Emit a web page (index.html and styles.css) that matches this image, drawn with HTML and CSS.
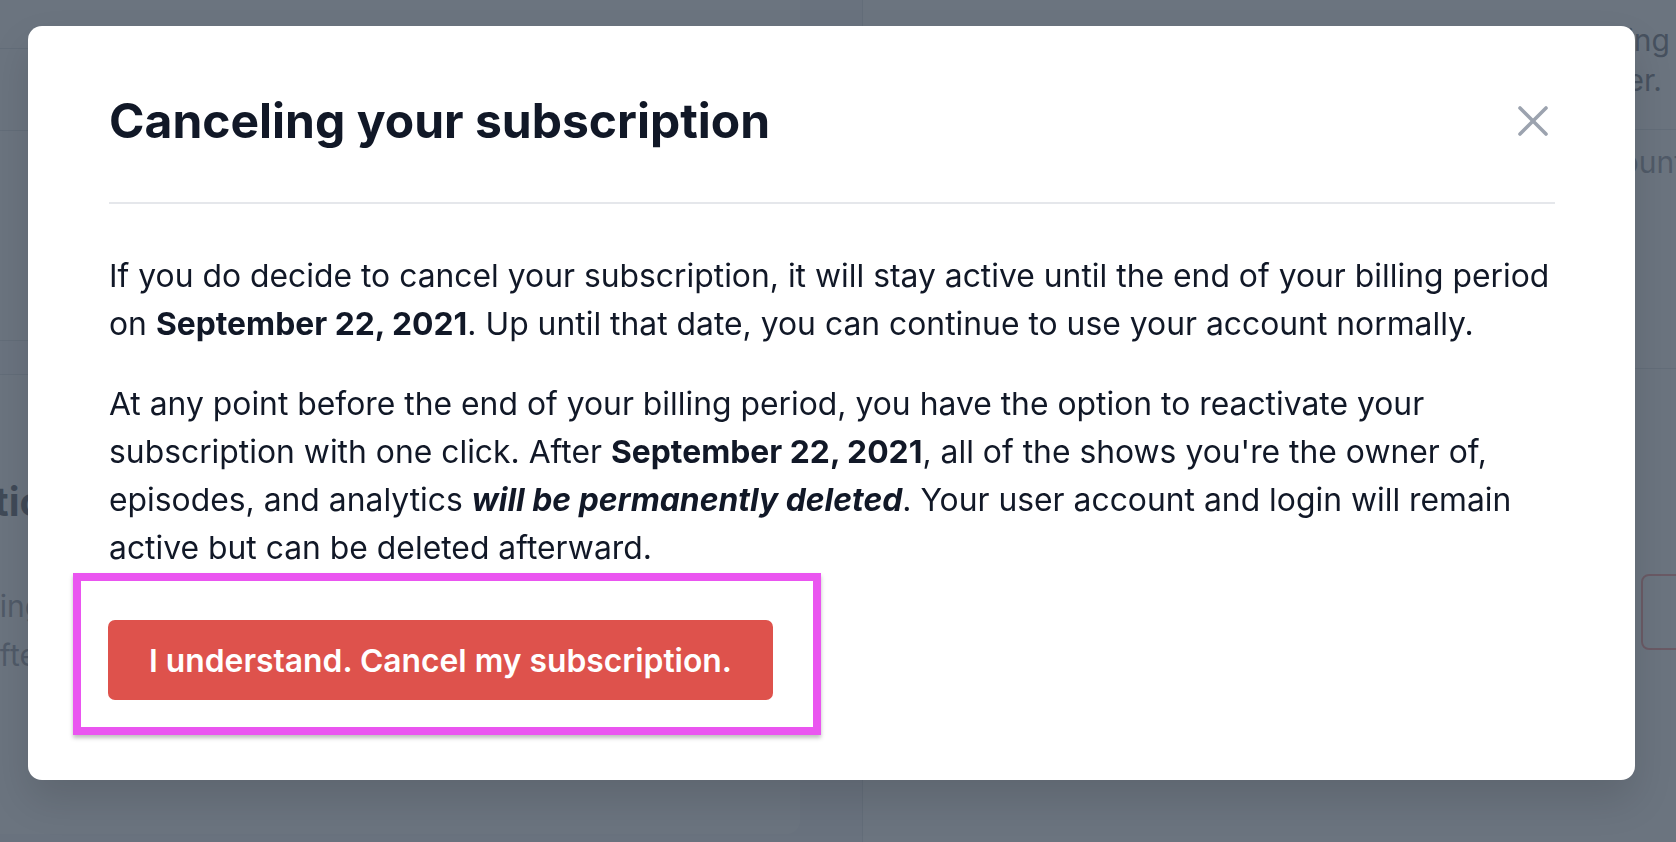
FILE: index.html
```html
<!DOCTYPE html>
<html>
<head>
  <title>Billing - Cancel subscription</title>
  <link rel="stylesheet" href="styles.css">
</head>
<body>
  <div class="page">
    <div class="page-left">
      <div class="row row-top"></div>
      <div class="row row-mid"></div>
      <div class="row row-tall"></div>
      <div class="row row-band"></div>
      <div class="section">
        <h3 class="section-title">Cancellation</h3>
        <p class="section-text cut-long">Cancelling keeps your plan</p>
        <p class="section-text cut-short">afterward.</p>
      </div>
    </div>
    <div class="page-right">
      <div class="right-top">
        <p class="right-text">Your plan renews automatically each billing</p>
        <p class="right-text shifted">period until you cancel it from this number.</p>
      </div>
      <div class="right-mid">
        <p class="right-text faint">Manage your account</p>
      </div>
      <div class="right-low">
        <span class="ghost-btn"></span>
      </div>
    </div>
  </div>

  <div class="overlay"></div>

  <div class="modal">
    <div class="modal-header">
      <h2>Canceling your subscription</h2>
      <button class="close-btn" type="button" aria-label="Close">
        <svg width="32" height="32" viewBox="0 0 32 32" fill="none" stroke="#9ca3af" stroke-width="3.6" stroke-linecap="round">
          <path d="M3 3 L29 29"></path>
          <path d="M29 3 L3 29"></path>
        </svg>
      </button>
    </div>
    <div class="modal-body">
      <p>If you do decide to cancel your subscription, it will stay active until the end of your billing period on <strong>September 22, 2021</strong>. Up until that date, you can continue to use your account normally.</p>
      <p>At any point before the end of your billing period, you have the option to reactivate your subscription with one click. After <strong>September 22, 2021</strong>, all of the shows you're the owner of, episodes, and analytics <strong><em>will be permanently deleted</em></strong>. Your user account and login will remain active but can be deleted afterward.</p>
      <div class="action">
        <button class="danger-btn" type="button">I understand. Cancel my subscription.</button>
        <span class="highlight"></span>
      </div>
    </div>
  </div>
</body>
</html>
```

FILE: styles.css
```css
/* Page behind the dialog */

html, body {
    height: 100%;
}

body {
    margin: 0;
    padding: 0;
    font-family: Inter, "Noto Sans", sans-serif;
    color: #111827;
    background: #f3f4f6;
    overflow: hidden;
}

.page {
    display: flex;
    gap: 62px;
    height: 100%;
}

.page-left {
    width: 800px;
    height: 834px;
    background: #fff;
    border-bottom-right-radius: 14px;
    flex-shrink: 0;
    overflow: hidden;
}

.page-left .row {
    border-bottom: 1px solid #d1d5db;
}

.row-top {
    height: 48px;
}

.row-mid {
    height: 81px;
}

.row-tall {
    height: 209px;
}

.row-band {
    height: 33px;
    background: #f9fafb;
}

.section {
    padding-top: 103px;
}

.section-title {
    margin: 0 0 58px -176px;
    font-size: 40px;
    line-height: 48px;
    font-weight: 700;
    color: #111827;
}

.section-text {
    margin: 0 0 4px;
    font-size: 30px;
    line-height: 45px;
    color: #6b7280;
    white-space: nowrap;
}

.cut-long {
    margin-left: -106px;
}

.cut-short {
    margin-left: -17px;
}

.page-right {
    flex: 1;
    background: #fff;
    border-left: 1px solid #d1d5db;
    overflow: hidden;
}

.right-top {
    padding-top: 20px;
    height: 109px;
    border-bottom: 1px solid #d1d5db;
    white-space: nowrap;
}

.right-text {
    margin: 0 6px 0 0;
    font-size: 30px;
    line-height: 40px;
    color: #374151;
    text-align: right;
    white-space: nowrap;
}

.right-text.shifted {
    margin-right: 14px;
}

.right-text.faint {
    margin-right: -8px;
    color: #6b7280;
}

.right-mid {
    padding-top: 12px;
    height: 226px;
    border-bottom: 1px solid #d1d5db;
}

.right-low {
    padding-top: 205px;
    padding-left: 778px;
}

.ghost-btn {
    display: inline-block;
    width: 120px;
    height: 72px;
    border: 2px solid #f87171;
    border-radius: 8px;
}

/* Dialog */

.overlay {
    position: fixed;
    inset: 0;
    background: rgba(75, 85, 99, .82);
}

.modal {
    position: absolute;
    top: 26px;
    left: 28px;
    width: 1607px;
    box-sizing: border-box;
    padding: 0 80px 80px 81px;
    background: #fff;
    border-radius: 14px;
    box-shadow: 0 20px 40px rgba(0, 0, 0, .12);
}

.modal-header {
    display: flex;
    align-items: center;
    justify-content: space-between;
    padding: 65px 0 51px;
    border-bottom: 2px solid #e5e7eb;
}

.modal-header h2 {
    margin: 0;
    font-size: 48px;
    line-height: 60px;
    font-weight: 700;
    color: #111827;
}

.close-btn {
    display: flex;
    padding: 0;
    margin-right: 6px;
    border: none;
    background: none;
}

.modal-body {
    padding-top: 48px;
}

.modal-body p {
    margin: 0 0 32px;
    font-size: 31.85px;
    line-height: 48px;
}

.modal-body strong {
    font-weight: 700;
}

.action {
    position: relative;
    display: inline-block;
    margin-top: 16px;
}

.danger-btn {
    display: block;
    height: 80px;
    padding: 0 41px;
    margin-left: -1px;
    border: none;
    border-radius: 7px;
    background: #de524c;
    color: #fff;
    font-family: Inter, "Noto Sans", sans-serif;
    font-size: 31.8px;
    font-weight: 600;
}

.highlight {
    position: absolute;
    top: -47px;
    left: -36px;
    right: -48px;
    bottom: -35px;
    border: 8px solid #ea55f0;
    box-shadow: 0 3px 4px rgba(0, 0, 0, .25);
    pointer-events: none;
}
```
